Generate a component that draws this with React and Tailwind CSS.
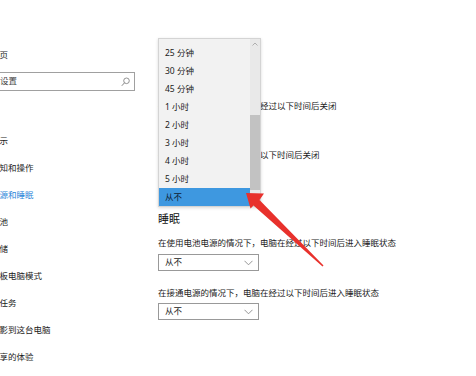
import React from 'react'

const font = { fontFamily: '"Noto Sans", "Noto Sans CJK SC", sans-serif' }

const navItems = [
  { label: '显示' },
  { label: '通知和操作' },
  { label: '电源和睡眠', active: true },
  { label: '电池' },
  { label: '存储' },
  { label: '平板电脑模式' },
  { label: '多任务' },
  { label: '投影到这台电脑' },
  { label: '共享的体验' },
]

const options = ['25 分钟', '30 分钟', '45 分钟', '1 小时', '2 小时', '3 小时', '4 小时', '5 小时', '从不']

function Chevron() {
  return (
    <svg width="9" height="6" viewBox="0 0 9 6" className="shrink-0">
      <path d="M0.5 0.8 L4.5 4.8 L8.5 0.8" fill="none" stroke="#8a8a8a" strokeWidth="0.9" />
    </svg>
  )
}

function Select({ value }) {
  return (
    <div className="w-[101px] h-[17px] border border-[#999] flex items-center justify-between pl-[6px] pr-[5px] bg-white">
      <span className="text-[8.5px] leading-none text-[#1a1a1a]">{value}</span>
      <Chevron />
    </div>
  )
}

export default function App() {
  return (
    <div className="relative w-[476px] h-[376px] overflow-hidden bg-white flex" style={font}>

      {/* Left nav, cut off at the window edge */}
      <div className="w-[158px] shrink-0 flex flex-col">
        <div className="mt-[46px] h-[18px] flex items-center -ml-[9px] text-[8.5px] text-[#1a1a1a] whitespace-nowrap">主页</div>
        <div className="mt-[8px] -ml-[20px] w-[155px] h-[19px] border border-[#a0a0a0] flex items-center justify-between pl-[2px] pr-[4px]">
          <span className="text-[8.5px] leading-none text-[#444] whitespace-nowrap">查找设置</span>
          <svg width="9" height="10" viewBox="0 0 9 10">
            <circle cx="5.5" cy="3.8" r="2.8" fill="none" stroke="#777" strokeWidth="0.8" />
            <path d="M3.5 5.8 L0.8 8.8" stroke="#777" strokeWidth="0.9" />
          </svg>
        </div>
        <div className="mt-[37px] flex flex-col">
          {navItems.map((item) => (
            <div
              key={item.label}
              className={`h-[27px] flex items-center -ml-[9px] text-[8.5px] whitespace-nowrap ${item.active ? 'text-[#2b86d9]' : 'text-[#1a1a1a]'}`}
            >
              {item.label}
            </div>
          ))}
        </div>
      </div>

      {/* Right content */}
      <div className="flex-1 flex flex-col pt-[100px] text-[#1a1a1a]">
        <p className="h-[12px] leading-[12px] text-[8.5px] whitespace-nowrap">在使用电池电源的情况下，经过以下时间后关闭</p>
        <div className="mt-[6px]"><Select value="从不" /></div>
        <p className="mt-[14px] h-[12px] leading-[12px] text-[8.5px] whitespace-nowrap">在接通电源的情况下，经过以下时间后关闭</p>
        <div className="mt-[6px]"><Select value="从不" /></div>
        <h2 className="mt-[27px] h-[15px] leading-[15px] text-[11px] text-[#111]">睡眠</h2>
        <p className="mt-[11px] h-[12px] leading-[12px] text-[8.5px] whitespace-nowrap">在使用电池电源的情况下，电脑在经过以下时间后进入睡眠状态</p>
        <div className="mt-[5px]"><Select value="从不" /></div>
        <p className="mt-[16px] h-[12px] leading-[12px] text-[8.5px] whitespace-nowrap">在接通电源的情况下，电脑在经过以下时间后进入睡眠状态</p>
        <div className="mt-[4px]"><Select value="从不" /></div>
      </div>

      {/* Open dropdown list */}
      <div className="absolute left-[158px] top-[38px] w-[103px] h-[169px] bg-[#f2f2f2] border border-[#d4d4d4] shadow-[0_1px_3px_rgba(0,0,0,0.15)] flex">
        <div className="flex-1 flex flex-col pt-[5px]">
          {options.map((opt) => (
            <div
              key={opt}
              className={`h-[18px] flex items-center pl-[6px] text-[8.5px] whitespace-nowrap ${opt === '从不' ? 'bg-[#3e98e0] text-[#102030]' : 'text-[#1a1a1a]'}`}
            >
              {opt}
            </div>
          ))}
        </div>
        <div className="w-[10px] flex flex-col items-center bg-[#e9e9e9]">
          <svg width="6" height="4" viewBox="0 0 6 4" className="mt-[3px]">
            <path d="M0.5 3.5 L3 1 L5.5 3.5" fill="none" stroke="#a0a0a0" strokeWidth="0.8" />
          </svg>
          <div className="mt-[69px] w-[10px] h-[75px] bg-[#c2c2c2]" />
        </div>
      </div>

      {/* Red annotation arrow */}
      <svg className="absolute left-0 top-0 pointer-events-none" width="476" height="376" viewBox="0 0 476 376">
        <polygon
          points="246,193 264,193.5 259.5,200 323.5,265.5 322.5,266.5 253.5,205.5 250.5,208.5"
          fill="#e8312c"
        />
      </svg>
    </div>
  )
}
